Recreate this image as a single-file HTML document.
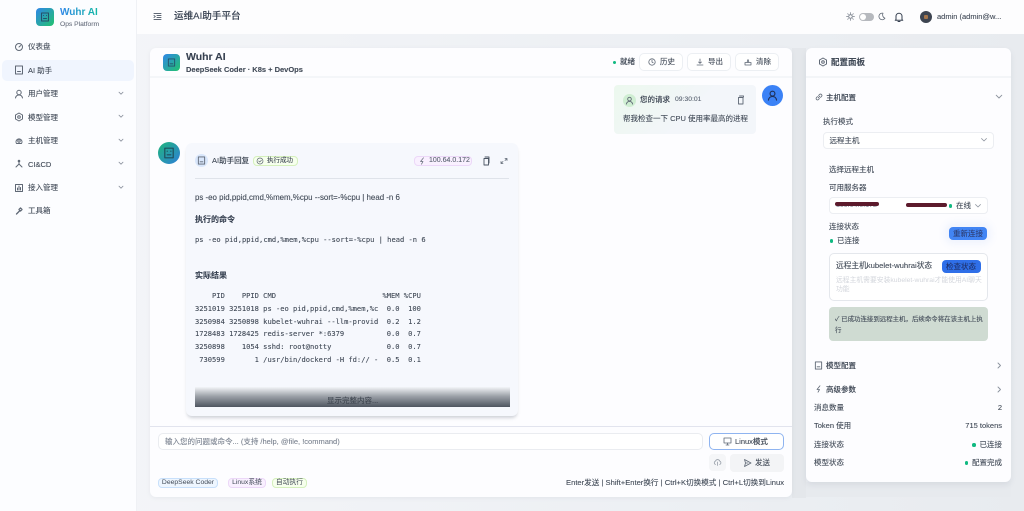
<!DOCTYPE html>
<html lang="zh-CN"><head><meta charset="utf-8"><title>运维AI助手平台</title>
<style>
*{box-sizing:border-box;margin:0;padding:0}
html{width:1024px;height:511px;overflow:hidden;background:#eef1f4}
body{width:1024px;height:511px;overflow:hidden;position:relative;font-family:"Liberation Sans","Noto Sans CJK SC",sans-serif;color:#414a57;font-size:7.5px;background:linear-gradient(90deg,#f5f6f9 0%,#eceff3 70%,#e8ebef 100%);filter:blur(.25px)}
.a{position:absolute}
.t{position:absolute;white-space:pre;line-height:12px;font-size:7.5px;color:#414a57;-webkit-text-stroke:.1px currentColor}
.m{font-family:"DejaVu Sans Mono","Liberation Mono","Noto Sans CJK SC",monospace}
svg{position:absolute;fill:none;stroke:#5f6875;stroke-width:1;stroke-linecap:round;stroke-linejoin:round}
.btn{position:absolute;background:#fff;border:1px solid #eceff3;border-radius:5px}
.dot{position:absolute;width:3.5px;height:3.5px;border-radius:50%;background:#10b981}
.tag{position:absolute;height:10px;border-radius:4px;font-size:6.8px;line-height:8.5px;text-align:center;white-space:pre;color:#414a57}
</style></head><body>

<!-- sidebar -->
<div class="a" style="left:0;top:0;width:137px;height:511px;background:#fcfdff;border-right:1px solid #eff1f5"></div>
<div class="a" style="left:36px;top:8px;width:18px;height:18px;border-radius:4px;background:linear-gradient(135deg,#2f86e8,#22c26e)"></div>
<svg style="left:40px;top:12px" width="10" height="10" viewBox="0 0 10 10"><rect x="1.500" y="1" width="7" height="8" stroke="#25506a"/><path d="M3.500 3.500h.1M6.500 3.500h.1M3.500 6.500h3" stroke="#25506a"/></svg>
<div class="t" style="left:60px;top:7px;font-size:10px;font-weight:700;-webkit-text-stroke:0;background:linear-gradient(90deg,#2f86e8,#14b8a6);-webkit-background-clip:text;background-clip:text;color:transparent">Wuhr AI</div>
<div class="t" style="left:60px;top:18.500px;font-size:6.700px;color:#6b7280">Ops Platform</div>

<div class="a" style="left:2px;top:60px;width:132px;height:21px;border-radius:5px;background:#f0f5fe"></div>
<svg style="left:14px;top:42px" width="10" height="10" viewBox="0 0 10 10"><circle cx="5" cy="5" r="3.500"/><path d="M5 5l1.600-1.400"/></svg>
<div class="t" style="left:28px;top:41px">仪表盘</div>
<svg style="left:14px;top:65px" width="10" height="10" viewBox="0 0 10 10"><rect x="1.500" y="1" width="7" height="8"/><path d="M3.500 6.500h3"/></svg>
<div class="t" style="left:28px;top:64.500px">AI 助手</div>
<svg style="left:14px;top:88.500px" width="10" height="10" viewBox="0 0 10 10"><circle cx="5" cy="3.500" r="2.200"/><path d="M1.500 9c.5-2.500 1.800-3 3.500-3s3 .5 3.500 3"/></svg>
<div class="t" style="left:28px;top:88px">用户管理</div>
<svg style="left:14px;top:112px" width="10" height="10" viewBox="0 0 10 10"><path d="M5 1l3.500 2v4L5 9 1.500 7V3z"/><circle cx="5" cy="5" r="1.300"/></svg>
<div class="t" style="left:28px;top:111.500px">模型管理</div>
<svg style="left:14px;top:135.500px" width="10" height="10" viewBox="0 0 10 10"><path d="M2.500 7.500a3 3 0 1 1 5 0z"/><circle cx="5" cy="5" r="1.200"/></svg>
<div class="t" style="left:28px;top:135px">主机管理</div>
<svg style="left:14px;top:159px" width="10" height="10" viewBox="0 0 10 10"><path d="M5 2v3L2 8M5 5l3 3"/><circle cx="5" cy="2" r=".8"/></svg>
<div class="t" style="left:28px;top:158.500px">CI&amp;CD</div>
<svg style="left:14px;top:183px" width="10" height="10" viewBox="0 0 10 10"><rect x="1.500" y="1.500" width="7" height="7"/><path d="M3.500 7V5M5 7V3M6.500 7V4.500"/></svg>
<div class="t" style="left:28px;top:182px">接入管理</div>
<svg style="left:14px;top:206px" width="10" height="10" viewBox="0 0 10 10"><path d="M2.500 8l3-3M5 3.500l1.500-1.500 1.500 1.500L6.500 5z" stroke-width="1.300"/></svg>
<div class="t" style="left:28px;top:205px">工具箱</div>
<svg style="left:118px;top:90.500px" width="6" height="5" viewBox="0 0 6 5"><path d="M1 1.200L3 3.200l2-2" stroke="#8b929d" stroke-width=".8"/></svg>
<svg style="left:118px;top:114px" width="6" height="5" viewBox="0 0 6 5"><path d="M1 1.200L3 3.200l2-2" stroke="#8b929d" stroke-width=".8"/></svg>
<svg style="left:118px;top:137.500px" width="6" height="5" viewBox="0 0 6 5"><path d="M1 1.200L3 3.200l2-2" stroke="#8b929d" stroke-width=".8"/></svg>
<svg style="left:118px;top:161px" width="6" height="5" viewBox="0 0 6 5"><path d="M1 1.200L3 3.200l2-2" stroke="#8b929d" stroke-width=".8"/></svg>
<svg style="left:118px;top:184.500px" width="6" height="5" viewBox="0 0 6 5"><path d="M1 1.200L3 3.200l2-2" stroke="#8b929d" stroke-width=".8"/></svg>

<!-- topbar -->
<div class="a" style="left:137px;top:0;width:887px;height:34px;background:#fdfdfe"></div>
<svg style="left:153px;top:12px" width="9" height="9" viewBox="0 0 9 9"><path d="M1 1.500h7M4 3.500h4M4 5.500h4M1 7.500h7M1 3.500l1.300 1L1 5.500"/></svg>
<div class="t" style="left:174px;top:10px;font-size:9.600px;font-weight:500;color:#374151;line-height:14px">运维AI助手平台</div>
<svg style="left:846px;top:12px" width="9" height="9" viewBox="0 0 9 9"><circle cx="4.500" cy="4.500" r="1.800" stroke-width=".8"/><path d="M4.500 .6v1M4.500 7.400v1M.6 4.500h1M7.400 4.500h1M1.700 1.700l.7.700M6.600 6.600l.7.700M1.700 7.300l.7-.7M6.600 2.400l.7-.7" stroke-width=".7"/></svg>
<div class="a" style="left:858.500px;top:13px;width:15px;height:8px;border-radius:4px;background:#b6b9be"></div>
<div class="a" style="left:859.500px;top:14px;width:6px;height:6px;border-radius:50%;background:#fff"></div>
<svg style="left:877px;top:12px" width="9" height="9" viewBox="0 0 9 9"><path d="M6 1.200a3.300 3.300 0 1 0 2 5 3.500 3.500 0 0 1-2-5z" stroke-width=".8"/></svg>
<svg style="left:893px;top:11px" width="12" height="12" viewBox="0 0 12 12"><path d="M3 8.500V5.200a3 3 0 0 1 6 0v3.300l.8 .8H2.200zM5 10.500h2" stroke="#374151" stroke-width="1"/></svg>
<div class="a" style="left:920px;top:11px;width:12px;height:12px;border-radius:50%;background:#3d4450"></div>
<div class="a" style="left:924px;top:15px;width:4px;height:4px;border-radius:1px;background:#a5754a"></div>
<div class="t" style="left:937px;top:11px;font-size:7.500px">admin (admin@w...</div>

<!-- gutter shading -->
<div class="a" style="left:792px;top:48px;width:14px;height:450px;background:#e4e7eb"></div>
<div class="a" style="left:806px;top:482px;width:205px;height:15px;background:#e7eaee"></div>

<!-- chat card -->
<div class="a" style="left:150px;top:48px;width:642px;height:449px;background:#fdfdff;border-radius:6px;box-shadow:0 1px 4px rgba(120,130,150,.10)"></div>
<div class="a" style="left:150px;top:76px;width:642px;height:2px;background:#f4f6f9"></div>
<div class="a" style="left:163px;top:54px;width:17px;height:17px;border-radius:4px;background:linear-gradient(135deg,#2f86e8,#22c26e)"></div>
<svg style="left:167px;top:58px" width="9" height="9" viewBox="0 0 10 10"><rect x="1.500" y="1" width="7" height="8" stroke="#25506a"/><path d="M3.500 6.500h3" stroke="#25506a"/></svg>
<div class="t" style="left:186px;top:49.500px;font-size:10.500px;font-weight:700;color:#374151;line-height:14px">Wuhr AI</div>
<div class="t" style="left:186px;top:64px;font-size:7.500px;font-weight:700">DeepSeek Coder · K8s + DevOps</div>

<div class="dot" style="left:612.500px;top:60.500px"></div>
<div class="t" style="left:620px;top:56px;font-weight:500">就绪</div>
<div class="btn" style="left:639px;top:53px;width:44px;height:18px"></div>
<svg style="left:648px;top:58px" width="8" height="8" viewBox="0 0 8 8"><circle cx="4" cy="4" r="3.200" stroke-width=".8"/><path d="M4 2.200V4l1.200.8" stroke-width=".8"/></svg>
<div class="t" style="left:660px;top:56px">历史</div>
<div class="btn" style="left:687px;top:53px;width:44px;height:18px"></div>
<svg style="left:696px;top:58px" width="8" height="8" viewBox="0 0 8 8"><path d="M4 1v4.200M2.500 4L4 5.300 5.500 4M1 7h6" stroke-width=".8"/></svg>
<div class="t" style="left:708px;top:56px">导出</div>
<div class="btn" style="left:735px;top:53px;width:44px;height:18px"></div>
<svg style="left:744px;top:58px" width="8" height="8" viewBox="0 0 8 8"><path d="M1 7V4.500h6V7zM3 4.500L4 1.500l1 3" stroke-width=".8"/></svg>
<div class="t" style="left:756px;top:56px">清除</div>

<!-- user bubble -->
<div class="a" style="left:614px;top:85px;width:142px;height:49px;border-radius:4px;background:linear-gradient(135deg,#ecf8ee,#f3f6fa 55%)"></div>
<div class="a" style="left:623px;top:94px;width:13px;height:13px;border-radius:50%;background:#cfeed2"></div>
<svg style="left:625px;top:96px" width="9" height="9" viewBox="0 0 10 10"><circle cx="5" cy="3.500" r="2"/><path d="M1.500 9c.5-2.500 1.800-3 3.500-3s3 .5 3.500 3"/></svg>
<div class="t" style="left:640px;top:94px;font-weight:500">您的请求</div>
<div class="t" style="left:675px;top:94px;font-size:6.800px;color:#5b6472">09:30:01</div>
<svg style="left:736px;top:95px" width="9" height="10" viewBox="0 0 9 10"><path d="M2.500 2.500h4.500V9H2.500zM3.500 1h4v1" stroke-width=".9"/></svg>
<div class="t" style="left:623px;top:113px">帮我检查一下 CPU 使用率最高的进程</div>
<div class="a" style="left:762px;top:85px;width:21px;height:21px;border-radius:50%;background:#3b82f6"></div>
<svg style="left:767px;top:90px" width="11" height="11" viewBox="0 0 10 10"><circle cx="5" cy="3.300" r="2.200" stroke="#1f2f55"/><path d="M1.300 9.200c.5-2.700 2-3.300 3.700-3.300s3.200 .6 3.700 3.300" stroke="#1f2f55"/></svg>

<!-- AI bubble -->
<div class="a" style="left:158px;top:142px;width:22px;height:22px;border-radius:50%;background:linear-gradient(135deg,#1fb57c,#2f7fd8)"></div>
<svg style="left:163px;top:147px" width="12" height="12" viewBox="0 0 10 10"><rect x="1.500" y="1" width="7" height="8" stroke="#1f4f5c"/><path d="M3.500 3.500h.1M6.500 3.500h.1M3.500 6.500h3" stroke="#1f4f5c"/></svg>
<div class="a" style="left:186px;top:143px;width:332px;height:273px;border-radius:6px;background:#f6f8fd;box-shadow:0 3px 3px -1px rgba(90,100,115,.28)"></div>
<div class="a" style="left:195px;top:154px;width:13px;height:13px;border-radius:50%;background:#d8e6fb"></div>
<svg style="left:197px;top:156px" width="9" height="9" viewBox="0 0 10 10"><rect x="1.500" y="1" width="7" height="8"/><path d="M3.500 6.500h3"/></svg>
<div class="t" style="left:212px;top:155px;font-weight:500">AI助手回复</div>
<div class="a" style="left:253px;top:156px;width:45px;height:10px;border:1px solid #d5f0bd;background:#f6ffed;border-radius:4px"></div>
<div class="t" style="left:267px;top:155px;font-size:6.500px">执行成功</div>
<svg style="left:256px;top:157px" width="8" height="8" viewBox="0 0 8 8"><circle cx="4" cy="4" r="3" stroke-width=".7"/><path d="M2.700 4l1 1 1.700-1.800" stroke-width=".7"/></svg>
<div class="a" style="left:414px;top:156px;width:58px;height:10px;border:1px solid #ecd8f8;background:#f9f0ff;border-radius:4px"></div>
<div class="t" style="left:429px;top:155px;font-size:7px;color:#5b6472">100.64.0.172</div>
<svg style="left:419px;top:157px" width="7" height="8" viewBox="0 0 7 8"><path d="M4.500 .8L1.500 4.500h2.500L2.500 7.200" stroke-width=".7"/></svg>
<svg style="left:482px;top:156px" width="9" height="10" viewBox="0 0 9 10"><path d="M2 2.500h4.500V9H2zM3 1h4v6" stroke="#4b5563" stroke-width=".9"/></svg>
<svg style="left:500px;top:157px" width="8" height="8" viewBox="0 0 8 8"><path d="M5 1.500h2v2M7 1.500L5 3.500M3 6.500H1v-2M1 6.500l2-2" stroke-width=".8"/></svg>
<div class="a" style="left:195px;top:178px;width:314px;height:1px;background:#dfe3ea"></div>
<div class="t" style="left:195px;top:191.500px;font-size:7.900px">ps -eo pid,ppid,cmd,%mem,%cpu --sort=-%cpu | head -n 6</div>
<div class="t" style="left:195px;top:214px;font-size:8px;font-weight:700;color:#374151">执行的命令</div>
<div class="t m" style="left:195px;top:234px;font-size:7.100px">ps -eo pid,ppid,cmd,%mem,%cpu --sort=-%cpu | head -n 6</div>
<div class="t" style="left:195px;top:270px;font-size:8px;font-weight:700;color:#374151">实际结果</div>
<div class="t m" style="left:195px;top:290px;font-size:7.080px;line-height:12.800px">    PID    PPID CMD                         %MEM %CPU
3251019 3251018 ps -eo pid,ppid,cmd,%mem,%c  0.0  100
3250984 3250898 kubelet-wuhrai --llm-provid  0.2  1.2
1728483 1728425 redis-server *:6379          0.0  0.7
3250898    1054 sshd: root@notty             0.0  0.7
 730599       1 /usr/bin/dockerd -H fd:// -  0.5  0.1</div>
<div class="a" style="left:195px;top:387px;width:315px;height:20px;background:linear-gradient(180deg,#f3f5f8 0%,#9ea3aa 45%,#4e5560 100%)"></div>
<div class="t" style="left:327px;top:395px;font-size:7.500px;color:#3f4650">显示完整内容...</div>

<!-- input -->
<div class="a" style="left:150px;top:426px;width:642px;height:1px;background:#e2e4ee"></div>
<div class="a" style="left:158px;top:433px;width:545px;height:17px;background:#fff;border:1px solid #eaecf0;border-radius:5px"></div>
<div class="t" style="left:165px;top:435.500px;font-size:7.500px;color:#7b8390">输入您的问题或命令... (支持 /help, @file, !command)</div>
<div class="a" style="left:709px;top:433px;width:75px;height:17px;background:#fff;border:1px solid #8fb4f0;border-radius:5px"></div>
<svg style="left:723px;top:437px" width="9" height="9" viewBox="0 0 9 9"><rect x="1" y="1" width="7" height="5" stroke-width=".8"/><path d="M3 8h3M4.500 6v2" stroke-width=".8"/></svg>
<div class="t" style="left:735px;top:435.500px;font-weight:500">Linux模式</div>
<div class="a" style="left:709px;top:454px;width:17px;height:17px;background:#f5f6f8;border-radius:4px"></div>
<svg style="left:713px;top:458px" width="9" height="9" viewBox="0 0 9 9"><path d="M2.500 6.500a1.800 1.800 0 0 1 0-3.400 2.200 2.200 0 0 1 4.200 0 1.800 1.800 0 0 1 0 3.400M4.500 4v3.500" stroke="#9aa1ab" stroke-width=".8"/></svg>
<div class="a" style="left:730px;top:454px;width:54px;height:18px;background:#f3f4f6;border-radius:4px"></div>
<svg style="left:743px;top:458px" width="9" height="10" viewBox="0 0 9 10"><path d="M1.500 1.500L8 5 1.500 8.500 2.500 5zM2.500 5H5" stroke-width=".8"/></svg>
<div class="t" style="left:755px;top:457px">发送</div>
<div class="tag" style="left:158px;top:478px;width:60px;border:1px solid #c8e0fb;background:#eef6ff;font-weight:500">DeepSeek Coder</div>
<div class="tag" style="left:228px;top:478px;width:38px;border:1px solid #ecd8f8;background:#f9f0ff">Linux系统</div>
<div class="tag" style="left:272px;top:478px;width:35px;border:1px solid #d5f0bd;background:#f6ffed">自动执行</div>
<div class="t" style="right:240px;top:477px;font-size:7.600px">Enter发送 | Shift+Enter换行 | Ctrl+K切换模式 | Ctrl+L切换到Linux</div>

<!-- config card -->
<div class="a" style="left:806px;top:48px;width:205px;height:434px;background:#fdfdff;border-radius:6px;box-shadow:0 3px 6px rgba(120,130,150,.14)"></div>
<div class="a" style="left:806px;top:76px;width:205px;height:2px;background:#f3f5f8"></div>
<svg style="left:818px;top:57px" width="10" height="10" viewBox="0 0 10 10"><path d="M5 1l3.500 2v4L5 9 1.500 7V3z"/><circle cx="5" cy="5" r="1.300"/></svg>
<div class="t" style="left:831px;top:56px;font-size:8.500px;font-weight:700">配置面板</div>
<svg style="left:815px;top:93px" width="8" height="8" viewBox="0 0 8 8"><path d="M3.200 4.800L4.800 3.200M2.500 3.500l-1 1a1.400 1.400 0 0 0 2 2l1-1M5.500 4.500l1-1a1.400 1.400 0 0 0-2-2l-1 1" stroke-width=".8"/></svg>
<div class="t" style="left:826px;top:92px;font-weight:500">主机配置</div>
<svg style="left:995px;top:94px" width="8" height="6" viewBox="0 0 8 6"><path d="M1.200 1.200L4 4l2.800-2.800" stroke="#8b929d" stroke-width=".9"/></svg>
<div class="t" style="left:823px;top:116px">执行模式</div>
<div class="a" style="left:823px;top:132px;width:171px;height:17px;background:#fff;border:1px solid #eceef2;border-radius:4px"></div>
<div class="t" style="left:829.500px;top:135px">远程主机</div>
<svg style="left:980px;top:137px" width="8" height="6" viewBox="0 0 8 6"><path d="M1.500 1.500L4 4l2.500-2.500" stroke="#8b929d" stroke-width=".8"/></svg>
<div class="t" style="left:829px;top:164px">选择远程主机</div>
<div class="t" style="left:829px;top:181.500px">可用服务器</div>
<div class="a" style="left:829px;top:197px;width:159px;height:17px;background:#fff;border:1px solid #eceef2;border-radius:4px"></div>
<div class="t" style="left:836px;top:200px;font-size:7px;color:#8c93a0">100.64.0.172</div>
<div class="a" style="left:835px;top:201.500px;width:44px;height:4px;border-radius:2px;background:#5c1a2c"></div>
<div class="a" style="left:906px;top:203px;width:41px;height:4px;border-radius:2px;background:#5c1a2c"></div>
<div class="dot" style="left:948.500px;top:204px"></div>
<div class="t" style="left:956px;top:200px">在线</div>
<svg style="left:974px;top:203px" width="8" height="6" viewBox="0 0 8 6"><path d="M1.500 1.500L4 4l2.500-2.500" stroke="#8b929d" stroke-width=".8"/></svg>
<div class="t" style="left:829px;top:221px">连接状态</div>
<div class="dot" style="left:829.500px;top:239px"></div>
<div class="t" style="left:837px;top:235px">已连接</div>
<div class="a" style="left:949px;top:227px;width:38px;height:13px;border-radius:4px;background:#4285f4;box-shadow:0 0 8px 4px rgba(80,130,240,.08)"></div>
<div class="t" style="left:953px;top:228px;color:#2d3d70">重新连接</div>

<div class="a" style="left:829px;top:253px;width:159px;height:48px;background:#fff;border:1px solid #e4e7ec;border-radius:5px"></div>
<div class="t" style="left:836px;top:260px;font-size:7.700px">远程主机kubelet-wuhrai状态</div>
<div class="a" style="left:942px;top:260px;width:39px;height:13px;border-radius:4px;background:#2f6fe8"></div>
<div class="t" style="left:946px;top:261px;color:#1f3068">检查状态</div>
<div class="t" style="left:836px;top:275.500px;font-size:6.800px;line-height:9px;color:#d3d6dc;-webkit-text-stroke:0">远程主机需要安装kubelet-wuhrai才能使用AI聊天
功能</div>
<div class="a" style="left:829px;top:307px;width:159px;height:34px;border-radius:4px;background:#cfdbd2"></div>
<div class="t" style="left:835px;top:314px;font-size:6.450px;line-height:11px">✓ 已成功连接到远程主机，后续命令将在该主机上执
行</div>

<svg style="left:814px;top:361px" width="9" height="9" viewBox="0 0 10 10"><rect x="1.500" y="1" width="7" height="8"/><path d="M3.500 6.500h3"/></svg>
<div class="t" style="left:826px;top:359.500px;font-weight:500">模型配置</div>
<svg style="left:997px;top:362px" width="5" height="7" viewBox="0 0 5 7"><path d="M1 1l2.500 2.500L1 6" stroke="#8b929d" stroke-width=".9"/></svg>
<svg style="left:815px;top:385px" width="8" height="8" viewBox="0 0 8 8"><path d="M5 .8L2 4.500h2.500L3 7.200" stroke-width=".8"/></svg>
<div class="t" style="left:826px;top:384px;font-weight:500">高级参数</div>
<svg style="left:997px;top:386px" width="5" height="7" viewBox="0 0 5 7"><path d="M1 1l2.500 2.500L1 6" stroke="#8b929d" stroke-width=".9"/></svg>
<div class="t" style="left:814px;top:402px">消息数量</div>
<div class="t" style="right:22px;top:402px">2</div>
<div class="t" style="left:814px;top:420px">Token 使用</div>
<div class="t" style="right:22px;top:420px">715 tokens</div>
<div class="t" style="left:814px;top:438.500px">连接状态</div>
<div class="dot" style="left:972px;top:443px"></div>
<div class="t" style="right:22px;top:438.500px">已连接</div>
<div class="t" style="left:814px;top:456.500px">模型状态</div>
<div class="dot" style="left:964.500px;top:461px"></div>
<div class="t" style="right:22px;top:456.500px">配置完成</div>
</body></html>
